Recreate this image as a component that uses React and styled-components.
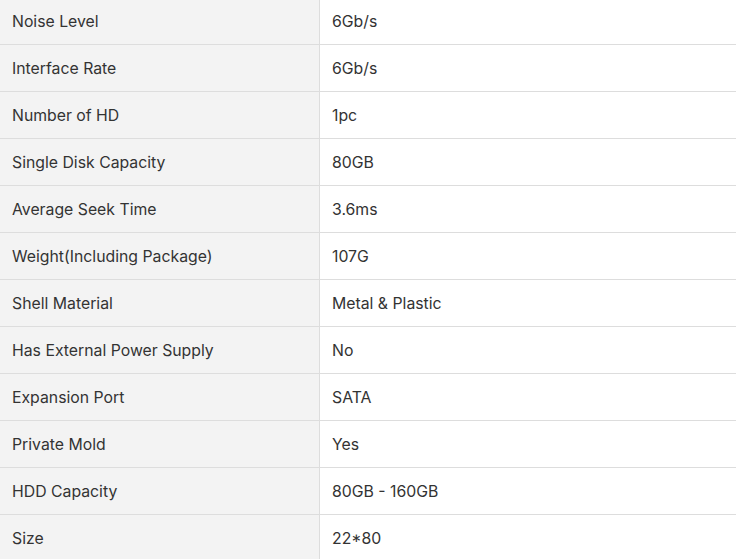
import styled, {createGlobalStyle} from 'styled-components'

const GlobalStyle = createGlobalStyle`
  html, body {
    margin: 0;
    padding: 0;
    background: #ffffff;
    overflow: hidden;
  }
`

const specs = [
  ['Noise Level', '6Gb/s'],
  ['Interface Rate', '6Gb/s'],
  ['Number of HD', '1pc'],
  ['Single Disk Capacity', '80GB'],
  ['Average Seek Time', '3.6ms'],
  ['Weight(Including Package)', '107G'],
  ['Shell Material', 'Metal & Plastic'],
  ['Has External Power Supply', 'No'],
  ['Expansion Port', 'SATA'],
  ['Private Mold', 'Yes'],
  ['HDD Capacity', '80GB - 160GB'],
  ['Size', '22*80'],
]

const SpecTable = styled.div`
  margin-top: -2px;
  width: 736px;
  font-family: Inter, 'Noto Sans', sans-serif;
  font-size: 15.8px;
  color: #333333;
`

const Row = styled.div`
  display: grid;
  grid-template-columns: 320px 1fr;
  height: 46px;
  border-bottom: 1px solid #dddddd;
`

const Cell = styled.div`
  display: flex;
  align-items: center;
  padding: 0 12px;
  background: ${props => (props.label ? '#f3f3f3' : '#ffffff')};
  border-right: ${props => (props.label ? '1px solid #dddddd' : 'none')};
`

const App = () => (
  <>
    <GlobalStyle />
    <SpecTable>
      {specs.map(([name, value]) => (
        <Row key={name}>
          <Cell label>{name}</Cell>
          <Cell>{value}</Cell>
        </Row>
      ))}
    </SpecTable>
  </>
)

export default App
